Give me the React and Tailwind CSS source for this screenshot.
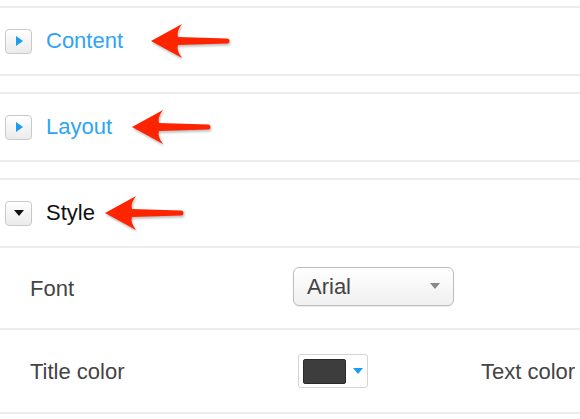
import React from 'react';

// Red annotation arrow pointing left
const Arrow = ({ className }) => (
  <svg
    width="80"
    height="34"
    viewBox="0 0 80 34"
    className={`drop-shadow-[1px_2px_1px_rgba(0,0,0,0.25)] ${className}`}
  >
    <path
      d="M0 17 L31 0 Q25 8 27 13 L76 14.5 A2.5 2.5 0 0 1 76 19.5 L27 21 Q25 26 31 34 Z"
      fill="#ff2400"
    />
  </svg>
);

const Toggle = ({ open }) => (
  <div className="w-[27px] h-[25px] rounded-[4px] border border-[#c9c9c9] bg-gradient-to-b from-white to-[#ebebeb] flex items-center justify-center shrink-0">
    {open ? (
      <div className="w-0 h-0 border-l-[5px] border-r-[5px] border-t-[6px] border-l-transparent border-r-transparent border-t-[#111]" />
    ) : (
      <div className="w-0 h-0 border-t-[5px] border-b-[5px] border-l-[7px] border-t-transparent border-b-transparent border-l-[#1a9cf0] ml-[1px]" />
    )}
  </div>
);

const Section = ({ title, open, arrowGap }) => (
  <div className="h-[70px] border-y-2 border-[#ededed] flex items-center pl-[5px] mb-[16px]">
    <Toggle open={open} />
    <span className={`ml-[14px] text-[22px] leading-none ${open ? 'text-[#111]' : 'text-[#2fa4f5]'}`}>
      {title}
    </span>
    <Arrow className={arrowGap} />
  </div>
);

const App = () => {
  return (
    <div className="w-[580px] h-[419px] bg-white pt-[6px] overflow-hidden font-['Liberation_Sans',Arial,sans-serif]">
      {/* Collapsible headers */}
      <Section title="Content" open={false} arrowGap="ml-[28px]" />
      <Section title="Layout" open={false} arrowGap="ml-[20px]" />
      <div className="h-[70px] border-y-2 border-[#ededed] flex items-center pl-[5px]">
        <Toggle open />
        <span className="ml-[14px] text-[22px] leading-none text-[#111]">Style</span>
        <Arrow className="ml-[10px]" />
      </div>

      {/* Font row */}
      <div className="h-[82px] border-b-2 border-[#ededed] flex items-center">
        <span className="w-[293px] pl-[30px] text-[22px] text-[#444]">Font</span>
        <div className="w-[161px] h-[39px] -mt-[4px] rounded-[6px] border border-[#bdbdbd] bg-gradient-to-b from-white to-[#f0f0f0] shadow-[0_1px_1px_rgba(0,0,0,0.08)] flex items-center justify-between pl-[13px] pr-[13px]">
          <span className="text-[22px] text-[#444]">Arial</span>
          <div className="w-0 h-0 border-l-[5px] border-r-[5px] border-t-[6px] border-l-transparent border-r-transparent border-t-[#888]" />
        </div>
      </div>

      {/* Color row */}
      <div className="h-[84px] border-b-2 border-[#ededed] flex items-center">
        <span className="w-[293px] pl-[30px] text-[22px] text-[#444]">Title color</span>
        <div className="ml-[5px] w-[70px] h-[34px] rounded-[3px] border border-[#d4d4d4] bg-white flex items-center pl-[4px]">
          <div className="w-[43px] h-[25px] rounded-[2px] bg-[#3d3d3d] border border-[#2a2a2a]" />
          <div className="ml-[7px] w-0 h-0 border-l-[5px] border-r-[5px] border-t-[6px] border-l-transparent border-r-transparent border-t-[#1a9cf0]" />
        </div>
        <span className="ml-[113px] text-[22px] text-[#444] whitespace-nowrap">Text color</span>
      </div>
    </div>
  );
};

export default App;
